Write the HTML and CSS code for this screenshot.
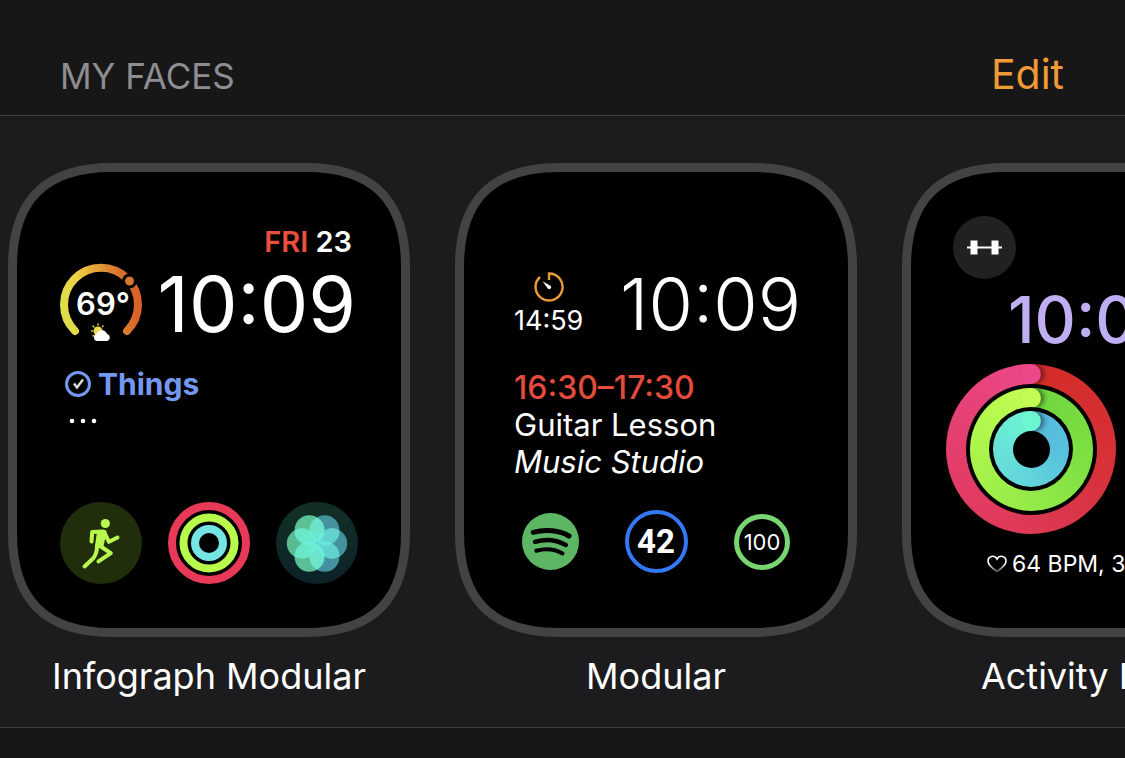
FILE: index.html
```html
<!DOCTYPE html>
<html lang="en">
<head>
<meta charset="utf-8">
<title>My Faces</title>
<link rel="stylesheet" href="styles.css">
</head>
<body>
<svg class="defs" aria-hidden="true">
  <symbol id="case" viewBox="0 0 402 474">
    <path d="M4.500 104C4.500 37 37 4.500 104 4.500H298C365 4.500 397.500 37 397.500 104V370C397.500 437 365 469.500 298 469.500H104C37 469.500 4.500 437 4.500 370Z" fill="#000" stroke="#434345" stroke-width="9"/>
  </symbol>
</svg>
<header class="bar">
  <h1 class="bar-title">MY FACES</h1>
  <button class="edit" type="button">Edit</button>
</header>
<main class="shelf">
  <figure class="item">
    <div class="face infograph">
      <svg class="case"><use href="#case"/></svg>
      <p class="date"><span class="day">FRI</span> 23</p>
      <div class="time-row">
        <svg class="gauge" viewBox="0 0 82 82" width="82" height="82">
          <defs><linearGradient id="heat" gradientUnits="userSpaceOnUse" x1="4" y1="60" x2="78" y2="46">
            <stop offset="0" stop-color="#dce04b"/><stop offset=".28" stop-color="#efd045"/><stop offset=".6" stop-color="#e29a36"/><stop offset=".85" stop-color="#d9702c"/><stop offset="1" stop-color="#d8622a"/>
          </linearGradient></defs>
          <path d="M15 68A37 37 0 1 1 67 68" fill="none" stroke="url(#heat)" stroke-width="8" stroke-linecap="round"/>
          <circle cx="69.500" cy="18" r="6" fill="#d9752d" stroke="#000" stroke-width="3"/>
          <text class="temp" x="43" y="52" text-anchor="middle">69°</text>
          <g stroke="#e8cf45" stroke-width="1.500" stroke-linecap="round"><path d="M38 61v1M33 63l1 1M31.500 68h1M43 63l-.500 .500M33 73l.500-.500"/></g>
          <circle cx="38" cy="68" r="4.500" fill="#f0dc4e"/>
          <path d="M37 78a3.600 3.600 0 0 1-.500-7 5.500 5.500 0 0 1 10.500 0 3.600 3.600 0 0 1 0 7Z" fill="#fff"/>
        </svg>
        <time class="clock">10:09</time>
      </div>
      <p class="app">
        <svg viewBox="0 0 26 26" width="26" height="26" fill="none"><circle cx="13" cy="13" r="11.500" stroke="#7398f2" stroke-width="3"/><path d="M9 12.500l3 4 6-8" stroke="#deded8" stroke-width="2.400"/></svg>
        <span>Things</span>
      </p>
      <svg class="more" viewBox="0 0 28 6" width="28" height="6" fill="#fff"><circle cx="3" cy="3" r="2.300"/><circle cx="14" cy="3" r="2.300"/><circle cx="25" cy="3" r="2.300"/></svg>
      <div class="dials">
        <svg viewBox="0 0 82 82" width="82" height="82">
          <circle cx="41" cy="41" r="41" fill="#202e0b"/>
          <g fill="none" stroke="#b9f94f" stroke-width="4" stroke-linecap="round" stroke-linejoin="round">
            <path d="M43 29.500L32.200 30 31.500 39.500M44 30l5 9.800 8.500-4.300"/>
            <path d="M37 44c0 5-1 8.500-3.500 12L24.500 64.500M40 44l10.800 7.200L38.500 59.300"/>
            <path d="M39 30h5.500L41.500 44h-4.500Z" fill="#b9f94f"/>
          </g>
          <circle cx="45.300" cy="21.500" r="4.600" fill="#b9f94f"/>
        </svg>
        <svg viewBox="0 0 82 82" width="82" height="82" fill="none" stroke-width="8">
          <circle cx="41" cy="41" r="37" stroke="#e83a58"/><circle cx="41" cy="41" r="25.500" stroke="#b9fb4d"/><circle cx="41" cy="41" r="14" stroke="#74e5e2"/>
        </svg>
        <svg viewBox="0 0 82 82" width="82" height="82">
          <defs>
            <linearGradient id="pond" x2="0" y2="1"><stop stop-color="#133027"/><stop offset="1" stop-color="#0b2228"/></linearGradient>
          </defs>
          <circle cx="41" cy="41" r="41" fill="url(#pond)"/>
          <g fill-opacity=".8">
            <circle cx="48.700" cy="28" r="14.700" fill="#53adbd"/><circle cx="56.500" cy="41.500" r="14.700" fill="#53adbd"/><circle cx="48.700" cy="55" r="14.700" fill="#53adbd"/>
            <circle cx="33.300" cy="55" r="14.700" fill="#6fe6b0"/><circle cx="25.500" cy="41.500" r="14.700" fill="#6ce0a9"/><circle cx="33.300" cy="28" r="14.700" fill="#6fe6b0"/>
          </g>
          <g fill="#6eeee0" fill-opacity=".6">
            <path d="M41 15.500a14.700 14.700 0 0 1 0 26 14.700 14.700 0 0 1 0-26Z" id="lens"/>
            <use href="#lens" transform="rotate(60 41 41.500)"/><use href="#lens" transform="rotate(120 41 41.500)"/><use href="#lens" transform="rotate(180 41 41.500)"/><use href="#lens" transform="rotate(240 41 41.500)"/><use href="#lens" transform="rotate(300 41 41.500)"/>
          </g>
        </svg>
      </div>
    </div>
    <figcaption class="name">Infograph Modular</figcaption>
  </figure>

  <figure class="item">
    <div class="face modular">
      <svg class="case"><use href="#case"/></svg>
      <div class="time-row">
        <div class="timer">
          <svg viewBox="0 0 32 32" width="32" height="32"><path d="M16 9V2.500A13.500 13.500 0 1 1 7 6" fill="none" stroke="#ea9a36" stroke-width="2.400"/><path d="M9.500 10.300l8.300 4.700a2 2 0 0 1-2.800 2.800Z" fill="#fff"/></svg>
          <span>14:59</span>
        </div>
        <time class="clock">10:09</time>
      </div>
      <div class="event">
        <p class="slot">16:30–17:30</p>
        <p>Guitar Lesson</p>
        <p class="place">Music Studio</p>
      </div>
      <div class="dials">
        <svg viewBox="0 0 57 57" width="57" height="57"><circle cx="28.500" cy="28.500" r="28.500" fill="#5cb663"/><g fill="none" stroke="#000" stroke-linecap="round"><path d="M11.300 19.300C24 15.800 38 17.500 47 23" stroke-width="5"/><path d="M13 28.800C24 25.500 35 27 43.800 32" stroke-width="4.500"/><path d="M14.300 37.800C24 35.200 33 36.300 40.500 40.500" stroke-width="4"/></g></svg>
        <span class="ring blue">42</span>
        <span class="ring green">100</span>
      </div>
    </div>
    <figcaption class="name">Modular</figcaption>
  </figure>

  <figure class="item">
    <div class="face activity">
      <svg class="case"><use href="#case"/></svg>
      <svg class="workout" viewBox="0 0 63 63" width="63" height="63"><circle cx="31.500" cy="31.500" r="31.500" fill="#212121"/><path d="M14 30.500h35v2H14ZM17.500 24.500h7v14h-7ZM38.500 24.500h7v14h-7Z" fill="#fff"/></svg>
      <time class="clock">10:09</time>
      <div class="rings move"><div class="gap"><div class="rings exercise"><div class="gap"><div class="rings stand"><div class="gap"></div></div></div></div></div></div>
      <p class="pulse">
        <svg viewBox="0 0 20 18" width="20" height="18"><defs><linearGradient id="fade" x2="0" y2="1"><stop offset=".5" stop-color="#fff"/><stop offset="1" stop-color="#555"/></linearGradient></defs><path d="M10 16.500C4 12.500 1 9.500 1 6c0-5 6.500-6.500 9-2 2.500-4.500 9-3 9 2 0 3.500-3 6.500-9 10.500Z" fill="none" stroke="url(#fade)" stroke-width="1.600"/></svg>
        <span>64 BPM, 3m ago</span>
      </p>
    </div>
    <figcaption class="name">Activity Digital</figcaption>
  </figure>
</main>
</body>
</html>
```
FILE: styles.css
```css
* { box-sizing: border-box; }
body {
  margin: 0;
  min-height: 100vh;
  background: #171717;
  color: #fff;
  font-family: Inter, "Liberation Sans", sans-serif;
  overflow-x: hidden;
}
p, h1, figure { margin: 0; }
svg { display: block; flex: none; }
.defs { position: absolute; width: 0; height: 0; }

.bar {
  display: flex;
  align-items: flex-end;
  justify-content: space-between;
  height: 116px;
  padding: 0 61px 16px 60px;
  border-bottom: 1px solid #3f3f41;
}
.bar-title { font-size: 35px; line-height: 46px; font-weight: 400; color: #8d8d92; }
.edit {
  padding: 0;
  border: 0;
  background: none;
  font: 400 41px/50px Inter, sans-serif;
  color: #f09a37;
}

.shelf {
  display: flex;
  gap: 45px;
  padding: 47px 8px 29px;
  overflow: hidden;
  background: #1c1c1e;
  border-bottom: 1px solid #3f3f41;
}
.item { flex: none; width: 402px; }
.name {
  margin-top: 17px;
  font-size: 36px;
  line-height: 44px;
  text-align: center;
  white-space: nowrap;
}

.face {
  position: relative;
  isolation: isolate;
  display: flex;
  flex-direction: column;
  height: 474px;
}
.case { position: absolute; inset: 0; z-index: -1; width: 100%; height: 100%; }
.time-row { display: flex; align-items: center; justify-content: space-between; }
.clock { white-space: nowrap; }

.infograph { padding: 64px 52px 53px; }
.date { padding-right: 6px; font-size: 29px; line-height: 30px; font-weight: 600; text-align: right; }
.day { color: #ea4e3d; }
.infograph .time-row { margin-top: 6px; padding-right: 2px; }
.infograph .clock { font-size: 77px; line-height: 82px; font-weight: 400; }
.temp { font-size: 31px; font-weight: 600; fill: #fff; }
.app {
  display: flex;
  align-items: center;
  gap: 7px;
  margin: 24px 0 0 5px;
  font-size: 30px;
  line-height: 30px;
  font-weight: 700;
  color: #7398f2;
}
.more { margin: 19px 0 0 9px; }
.dials { display: flex; justify-content: space-between; margin-top: auto; }

.modular { padding: 105px 42px 64px; }
.modular .time-row { padding: 0 14px 0 17px; height: 72px; }
.timer { display: flex; flex-direction: column; align-items: center; gap: 2px; font-size: 27px; line-height: 32px; }
.modular .clock { font-size: 72px; line-height: 76px; font-weight: 300; }
.event { margin: 29px 0 0 17px; font-size: 31px; line-height: 37px; }
.slot { font-size: 32px; font-weight: 500; color: #e34b3c; }
.place { font-style: italic; }
.modular .dials { display: grid; grid-template-columns: repeat(3, 1fr); align-items: center; justify-items: center; }
.ring { display: grid; place-items: center; border-radius: 50%; }
.blue { width: 63px; height: 63px; border: 4px solid #3478f6; font: 700 33px/33px Roboto, sans-serif; }
.green { width: 56px; height: 56px; border: 5px solid #77d572; font-size: 22px; line-height: 24px; }

.activity { padding: 53px 44px 0; }
.workout { margin-left: 7px; }
.activity .clock { margin: 7px 0 0 62px; font-size: 64px; line-height: 68px; font-weight: 500; color: #bfaef2; }
.rings { position: relative; display: grid; place-items: center; overflow: hidden; border-radius: 50%; }
.rings::before {
  content: "";
  position: absolute;
  top: 0;
  left: calc(50% - 10px);
  width: 20px;
  height: 20px;
  border-radius: 50%;
  background: var(--cap);
  box-shadow: 3px 0 5px rgba(0, 0, 0, .5);
}
.rings::after {
  content: "";
  position: absolute;
  top: 0;
  right: 50%;
  width: 16px;
  height: 20px;
  background: linear-gradient(90deg, transparent, var(--cap));
}
.gap { position: relative; z-index: 1; display: grid; place-items: center; border-radius: 50%; background: #000; }
.move { --cap: #ec4889; width: 170px; height: 170px; margin-top: 10px; background: conic-gradient(#d32c27, #d8313a 30%, #dd3956 50%, #e43e6c 75%, #ec4889); }
.move > .gap { width: 131px; height: 131px; }
.exercise { --cap: #c3fd53; width: 123px; height: 123px; background: conic-gradient(#6fd63e, #7fe043 30%, #94ea48 50%, #abf54b 75%, #c3fd53); }
.exercise > .gap { width: 84px; height: 84px; }
.stand { --cap: #6ef5d2; width: 76px; height: 76px; background: conic-gradient(#57b6dd, #58c4dc 30%, #61d4dc 50%, #68e3d8 75%, #6ef5d2); }
.stand > .gap { width: 37px; height: 37px; }
.pulse { display: flex; align-items: center; gap: 5px; margin: 15px 0 0 41px; font-size: 23px; line-height: 30px; white-space: nowrap; }
```
